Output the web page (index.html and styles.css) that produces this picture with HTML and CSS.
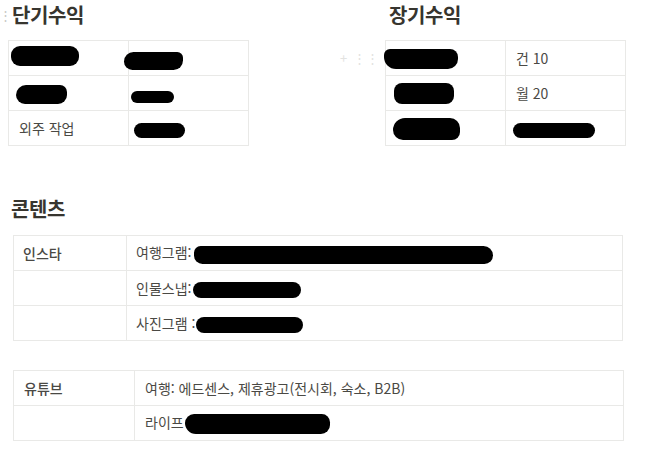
FILE: index.html
```html
<!DOCTYPE html>
<html lang="ko">
<head>
    <meta charset="UTF-8">
    <title>수익 구조</title>
    <link rel="stylesheet" href="styles.css">
</head>
<body>
    <div class="top-row">
        <section class="block block-short">
            <span class="handle handle-left">⋮⋮</span>
            <h3 class="block-title">단기수익</h3>
            <table class="sheet sheet-small">
                <tr>
                    <td><span class="ink ink-a"></span></td>
                    <td><span class="ink ink-b"></span></td>
                </tr>
                <tr>
                    <td><span class="ink ink-c"></span></td>
                    <td><span class="ink ink-d"></span></td>
                </tr>
                <tr>
                    <td>외주 작업</td>
                    <td><span class="ink ink-e"></span></td>
                </tr>
            </table>
        </section>

        <section class="block block-long">
            <span class="handle handle-row">+&nbsp;&nbsp;⋮⋮</span>
            <h3 class="block-title">장기수익</h3>
            <table class="sheet sheet-small">
                <tr>
                    <td><span class="ink ink-f"></span></td>
                    <td>건 10</td>
                </tr>
                <tr>
                    <td><span class="ink ink-g"></span></td>
                    <td>월 20</td>
                </tr>
                <tr>
                    <td><span class="ink ink-h"></span></td>
                    <td><span class="ink ink-i"></span></td>
                </tr>
            </table>
        </section>
    </div>

    <section class="content">
        <h3 class="block-title content-title">콘텐츠</h3>
        <table class="sheet sheet-insta">
            <tr>
                <td class="label">인스타</td>
                <td>여행그램: <span class="ink ink-j"></span></td>
            </tr>
            <tr>
                <td></td>
                <td>인물스냅:<span class="ink ink-k"></span></td>
            </tr>
            <tr>
                <td></td>
                <td>사진그램 :<span class="ink ink-l"></span></td>
            </tr>
        </table>

        <table class="sheet sheet-youtube">
            <tr>
                <td class="label">유튜브</td>
                <td>여행: 에드센스, 제휴광고(전시회, 숙소, B2B)</td>
            </tr>
            <tr>
                <td></td>
                <td>라이프<span class="ink ink-m"></span></td>
            </tr>
        </table>
    </section>
</body>
</html>
```

FILE: styles.css
```css
/* page */
body {
    margin: 0;
    font-family: "Noto Sans CJK KR", "Noto Sans", sans-serif;
    color: #37352f;
    background: #fff;
    overflow: hidden;
}

.top-row {
    display: flex;
}

.block {
    position: relative;
    width: 240px;
}

.block-short {
    margin-left: 8px;
}

.block-long {
    margin-left: 137px;
}

.block-title {
    margin: 0 0 10px 4px;
    height: 30px;
    font-size: 20px;
    line-height: 30px;
    font-weight: 700;
    letter-spacing: -0.4px;
}

/* drag handles, very faint */
.handle {
    position: absolute;
    color: #e3e3e1;
    font-size: 13px;
    line-height: 14px;
    letter-spacing: -3px;
}

.handle-left {
    left: -19px;
    top: 8px;
    color: #c8c8c6;
}

.handle-row {
    left: -45px;
    top: 51px;
    letter-spacing: 0;
}

/* tables */
.sheet {
    border-collapse: collapse;
    table-layout: fixed;
    font-size: 14px;
}

.sheet td {
    height: 34px;
    padding: 0 10px;
    border: 1px solid #e9e9e7;
    white-space: nowrap;
    line-height: 20px;
    vertical-align: middle;
    color: #4a4944;
}

.sheet-small {
    width: 239px;
}

.sheet-small td {
    width: 99px;
}

.content {
    margin-top: 48px;
    padding-left: 13px;
}

.content-title {
    margin-left: -2px;
    margin-bottom: 11px;
}

.sheet-insta {
    width: 610px;
}

.sheet-insta .label {
    width: 93px;
}

.sheet-insta td {
    padding-left: 9px;
}

.sheet-youtube {
    width: 611px;
    margin-top: 29px;
}

.sheet-youtube .label {
    width: 100px;
}

.label {
    font-weight: 500;
    color: #37352f;
}

/* redacted bits */
.ink {
    display: inline-block;
    vertical-align: middle;
    background: #000;
    border-radius: 9px;
}

.ink-a { width: 68px; height: 20px; margin: -9px 0 0 -8px; }
.ink-b { width: 59px; height: 18px; margin: 4px 0 0 -15px; border-radius: 10px 6px 10px 9px; }
.ink-c { width: 51px; height: 19px; margin: 0 0 0 -3px; border-radius: 10px 7px 9px 9px; }
.ink-d { width: 43px; height: 12px; margin: 3px 0 0 -8px; }
.ink-e { width: 51px; height: 15px; margin: 0 0 0 -5px; }
.ink-f { width: 74px; height: 20px; margin: 0 0 0 -12px; border-radius: 6px 8px 10px 12px; }
.ink-g { width: 60px; height: 21px; margin: 0 0 0 -2px; border-radius: 8px; }
.ink-h { width: 67px; height: 22px; margin: 0 0 0 -3px; border-radius: 12px 10px 8px 10px; }
.ink-i { width: 82px; height: 15px; margin: 0 0 0 -3px; }
.ink-j { width: 299px; height: 18px; margin: 0 0 0 -1px; border-radius: 7px 10px 9px 9px; }
.ink-k { width: 108px; height: 16px; margin: 0 0 0 2px; }
.ink-l { width: 107px; height: 16px; margin: 0 0 0 1px; }
.ink-m { width: 145px; height: 20px; margin: 0 0 0 1px; border-radius: 10px 9px 10px 12px; }
```
